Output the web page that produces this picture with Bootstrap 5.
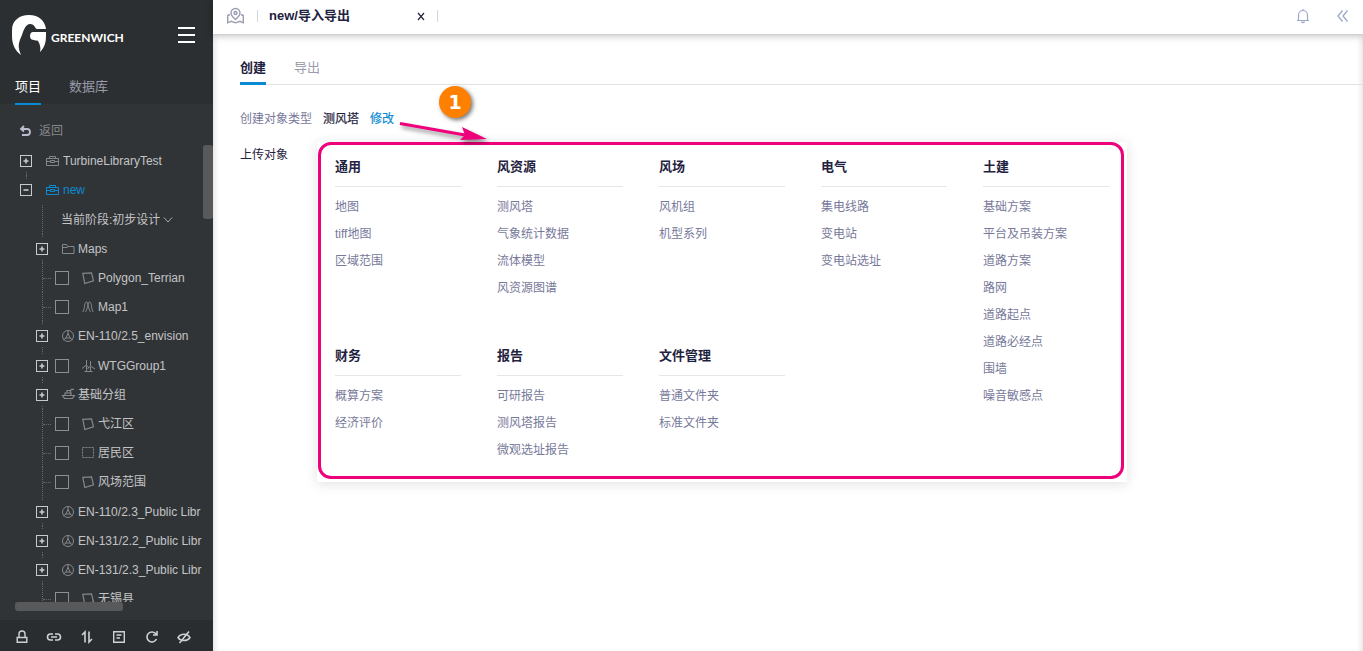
<!DOCTYPE html>
<html lang="zh-CN">
<head>
<meta charset="utf-8">
<meta name="viewport" content="width=device-width, initial-scale=1">
<title>Greenwich - 导入导出</title>
<link href="https://cdn.jsdelivr.net/npm/bootstrap@5.3.0/dist/css/bootstrap.min.css" rel="stylesheet">
<style>
body{font-family:"Liberation Sans","Noto Sans CJK SC",sans-serif;font-size:12px;line-height:16px;color:#1f2340;background:#fff}
svg{display:block;flex:none;overflow:visible}
button{line-height:16px}
a{text-decoration:none}
.bare{border:0;background:none;padding:0;color:inherit}
/* sidebar */
.side{width:213px;background:#313437;color:#c3c4c6}
.side-top{background:#2c2f31;height:104px;padding:0 18px 0 15px}
.brand{color:#fff;height:70px}
.brand-logo{margin-left:-3px}
.brand-name{font:700 12px/16px Lato,sans-serif;margin-left:5px;padding-top:5px}
.side-tabs{height:35px;gap:28px;font-size:13px}
.side-tabs a{color:#9a9bab;border-bottom:2px solid transparent;line-height:33px}
.side-tabs a.active{color:#fff;border-color:#0a8ad2}
.back{height:43px;padding:19px 0 0 20px;color:#85878a}
.tree{margin:0 10px 18px 0;overflow:hidden}
.tree ul{list-style:none;margin:0;padding:0 0 1px}
.node{height:29px;position:relative;white-space:nowrap;padding-left:20px}
.lvl2 .node{padding-left:36px}
.node::before{content:"";position:absolute;left:26px;top:0;bottom:0;border-left:1px dotted #66696c}
.lvl2 .node::before{left:42px}
.lvl1 .node:first-child::before{top:5px}
.lvl1 .node:last-child::before{bottom:15px}
.leaf::after{content:"";position:absolute;left:43px;width:8px;top:15px;border-top:1px dotted #66696c}
.exp{width:12px;height:21px;background:#313437;z-index:1;display:flex;align-items:center;color:#c8c9cb}
.slot{width:12px}
.ico{margin-left:14px;margin-right:4px;color:#85888b}
.node input[type=checkbox]{appearance:none;width:14px;height:14px;border:1px solid #8d9093;margin:0 0 0 7px;flex:none}
.node input+label .ico{margin-left:13px}
.node.current,.node.current .ico{color:#0a8ad2}
.stage select{appearance:none;border:0;background:none;color:inherit;padding:0;width:48px;font-size:12px;line-height:16px}
.lvl2 .stage{padding-left:61px}
.bar-v{position:absolute;right:0;top:145px;width:10px;height:74px;border-radius:3px;background:#58595a}
.bar-h{position:absolute;left:15px;bottom:40px;width:108px;height:9px;border-radius:3px;background:#58595a}
.side-foot{height:32px;background:#2a2d30;padding:4px 21px 0 14px;color:#d0d1d2}
/* top bar */
.top{height:34px;box-shadow:0 1px 8px rgba(0,0,0,.3);z-index:2;padding:0 14px 2px 14px;color:#9fa5bd}
.top .rule{width:1px;height:12px;background:#d5d6df}
.rule-open{margin:0 11px 0 13px}
.rule-close{margin-left:11px}
.collapse-btn{margin-left:28px}
.page-name{width:147px;font-size:13px;font-weight:700;color:#1f2340}
.content{padding:20px 0 0 27px;box-shadow:inset 5px 0 6px -4px rgba(0,0,0,.14),inset -5px 0 6px -4px rgba(0,0,0,.14)}
.main-tabs{border-bottom:1px solid #e2e2e4;gap:28px;height:31px}
.main-tabs a{color:#9b9cab;font-size:13px;line-height:28px;height:31px;border-bottom:3px solid transparent}
.main-tabs a.active{color:#1f2340;font-weight:700;border-color:#0a8ad2}
.type-row{margin-top:26px;gap:11px}
.type-row .picked{-webkit-text-stroke:.2px}
.muted{color:#77799a}
.edit{color:#0a8ad2;-webkit-text-stroke:.2px}
.upload{margin-top:15px}
.upload-label{width:77px;padding-top:5px}
.picker{max-width:810px;flex:1;padding:4px 18px 18px;box-shadow:0 2px 12px rgba(0,0,0,.12);display:grid;grid-template-columns:repeat(5,minmax(0,1fr));gap:33px 36px;background:#fff}
.picker h2{font-size:13px;line-height:38px;padding-top:2px;font-weight:700;margin:0 0 7px;border-bottom:1px solid #e6e6e9}
.picker section a{display:block;line-height:27px;color:#77799a}
.tall{grid-column:5;grid-row:1/3}
.frame{position:absolute;inset:0 3px 3px 1px;border:3px solid #ee007c;border-radius:13px;pointer-events:none}
.callout{position:absolute;left:80px;top:-60px;pointer-events:none;filter:drop-shadow(2px 3px 2px rgba(0,0,0,.45))}
.step{position:absolute;left:122px;top:-56px;width:32px;height:32px;border-radius:50%;background:#ff8000;color:#fff;font:700 19px/32px "DejaVu Sans",sans-serif;text-align:center;box-shadow:2px 2px 4px rgba(0,0,0,.55)}
</style>
</head>
<body>
<svg width="0" height="0" class="position-absolute" aria-hidden="true"><defs>
<g id="plus" fill="none" stroke="currentColor"><rect x=".5" y=".5" width="11" height="11"/><path d="M3.500 6h5M6 3.500v5" stroke-width="1.600"/></g>
<g id="minus" fill="none" stroke="currentColor"><rect x=".5" y=".5" width="11" height="11"/><path d="M3.500 6h5" stroke-width="1.600"/></g>
<g id="case" fill="none" stroke="currentColor"><path d="M.5 3.500h12v7H.5zM3.500 3.500v-2h6v2M.5 6.500h4m4 0h4M4.500 5.500h4v2h-4z"/></g>
<g id="folder" fill="none" stroke="currentColor"><path d="M.5 10.500v-9h4l1 2h6.500v7zM.5 4.500h5"/></g>
<g id="poly" fill="none" stroke="currentColor" stroke-width="1.200"><path d="M.8 1.300 9.500.8l2 8-8.700 2.700z"/></g>
<g id="contour" fill="none" stroke="currentColor"><path d="M.5 11C3 9 2 1 4.500 1S5.500 8 3.500 11M11.500 11C9 9 10 1 7.500 1S6.500 8 8.500 11"/></g>
<g id="turbine" fill="none" stroke="currentColor"><circle cx="6" cy="6" r="5.500"/><path d="M6 .5v4M4 8l-2.800 2M8 8l2.800 2M6 3.500 3.800 8h4.400z"/></g>
<g id="mill" fill="none" stroke="currentColor"><path d="M4.500 0v5L0 8.500M4.500 5 7 8M4.500 6v6M8.500 1v5L5.500 9M8.500 6 13 9M8.500 7v5M2.500 11.500h8"/></g>
<g id="base" fill="none" stroke="currentColor" stroke-width="1.200"><path d="M.6 6.500h11.800l-2 3H2.500zM3 6V4h6v2M5 4V1.500h3.500v2M8.500 1.500 9.500.3H12"/></g>
<g id="area" fill="none" stroke="currentColor"><rect x=".5" y=".5" width="11" height="10" stroke-dasharray="2 1"/></g>
</defs></svg>
<div class="d-flex vh-100 overflow-hidden">
<aside class="side d-flex flex-column flex-shrink-0 position-relative">
  <div class="side-top">
    <div class="brand d-flex align-items-center">
      <svg class="brand-logo" width="34" height="40" viewBox="0 0 34 40" fill="#fff"><path d="M9 40C3 36 0 29 0 21v-6C0 6 7 0 17 0s16 6 17 14h-9c-2 0-2-5-7-5-4 0-6 5-8 11C7 27 5 31 9 40z"/><path d="M21 17h13v4c0 7-2 12-6 16 1-4 0-8-2-11-1-1-2 0-4-1-2 0-4-1-4-4 0-2 1-4 3-4z"/></svg>
      <span class="brand-name">GREENWICH</span>
      <button class="bare ms-auto" aria-label="菜单"><svg width="17" height="16" viewBox="0 0 17 16" stroke="#fff" stroke-width="2"><path d="M0 1h17M0 8h17M0 15h17"/></svg></button>
    </div>
    <nav class="side-tabs d-flex"><a class="active" href="#">项目</a><a href="#">数据库</a></nav>
  </div>
  <div class="back"><button class="bare d-flex align-items-center"><svg width="11" height="10" viewBox="0 0 11 10" fill="none" stroke="#bcbdd0" stroke-width="1.800"><path d="M1 3h6a3 3 0 0 1 0 6H2M4 0 1 3l3 2.500"/></svg><span class="ms-2">返回</span></button></div>
  <div class="tree flex-grow-1">
    <ul class="lvl1">
      <li class="node d-flex align-items-center"><button class="bare exp" aria-label="展开"><svg width="12" height="12"><use href="#plus"/></svg></button><svg class="ico" width="13" height="12"><use href="#case"/></svg>TurbineLibraryTest</li>
      <li class="node current d-flex align-items-center"><button class="bare exp" aria-label="收起"><svg width="12" height="12"><use href="#minus"/></svg></button><svg class="ico" width="13" height="12"><use href="#case"/></svg>new</li>
    </ul>
    <ul class="lvl2">
      <li class="node stage d-flex align-items-center"><label for="stage">当前阶段:</label><select id="stage"><option>初步设计</option></select><svg class="ms-1" width="8" height="8" fill="none" stroke="#a9abad"><path d="M0 1.500 4 6l4-4.500"/></svg></li>
      <li class="node d-flex align-items-center"><button class="bare exp" aria-label="展开"><svg width="12" height="12"><use href="#plus"/></svg></button><svg class="ico" width="12" height="12"><use href="#folder"/></svg>Maps</li>
      <li class="node leaf d-flex align-items-center"><span class="slot"></span><input type="checkbox" id="n1"><label class="d-flex align-items-center" for="n1"><svg class="ico" width="12" height="12"><use href="#poly"/></svg>Polygon_Terrian</label></li>
      <li class="node leaf d-flex align-items-center"><span class="slot"></span><input type="checkbox" id="n2"><label class="d-flex align-items-center" for="n2"><svg class="ico" width="12" height="12"><use href="#contour"/></svg>Map1</label></li>
      <li class="node d-flex align-items-center"><button class="bare exp" aria-label="展开"><svg width="12" height="12"><use href="#plus"/></svg></button><svg class="ico" width="12" height="12"><use href="#turbine"/></svg>EN-110/2.5_envision</li>
    </ul>
    <ul class="lvl2">
      <li class="node d-flex align-items-center"><button class="bare exp" aria-label="展开"><svg width="12" height="12"><use href="#plus"/></svg></button><input type="checkbox" id="n3"><label class="d-flex align-items-center" for="n3"><svg class="ico" width="12" height="12"><use href="#mill"/></svg>WTGGroup1</label></li>
      <li class="node d-flex align-items-center"><button class="bare exp" aria-label="展开"><svg width="12" height="12"><use href="#plus"/></svg></button><svg class="ico" width="12" height="12"><use href="#base"/></svg>基础分组</li>
      <li class="node leaf d-flex align-items-center"><span class="slot"></span><input type="checkbox" id="n4"><label class="d-flex align-items-center" for="n4"><svg class="ico" width="12" height="12"><use href="#poly"/></svg>弋江区</label></li>
      <li class="node leaf d-flex align-items-center"><span class="slot"></span><input type="checkbox" id="n5"><label class="d-flex align-items-center" for="n5"><svg class="ico" width="12" height="12"><use href="#area"/></svg>居民区</label></li>
      <li class="node leaf d-flex align-items-center"><span class="slot"></span><input type="checkbox" id="n6"><label class="d-flex align-items-center" for="n6"><svg class="ico" width="12" height="12"><use href="#poly"/></svg>风场范围</label></li>
    </ul>
    <ul class="lvl2">
      <li class="node d-flex align-items-center"><button class="bare exp" aria-label="展开"><svg width="12" height="12"><use href="#plus"/></svg></button><svg class="ico" width="12" height="12"><use href="#turbine"/></svg>EN-110/2.3_Public Libr</li>
      <li class="node d-flex align-items-center"><button class="bare exp" aria-label="展开"><svg width="12" height="12"><use href="#plus"/></svg></button><svg class="ico" width="12" height="12"><use href="#turbine"/></svg>EN-131/2.2_Public Libr</li>
      <li class="node d-flex align-items-center"><button class="bare exp" aria-label="展开"><svg width="12" height="12"><use href="#plus"/></svg></button><svg class="ico" width="12" height="12"><use href="#turbine"/></svg>EN-131/2.3_Public Libr</li>
      <li class="node leaf d-flex align-items-center"><span class="slot"></span><input type="checkbox" id="n7"><label class="d-flex align-items-center" for="n7"><svg class="ico" width="12" height="12"><use href="#poly"/></svg>无锡县</label></li>
    </ul>
  </div>
  <span class="bar-v"></span><span class="bar-h"></span>
  <div class="side-foot d-flex justify-content-between align-items-center">
    <button class="bare" aria-label="锁定"><svg width="16" height="14" fill="none" stroke="currentColor" stroke-width="1.400"><path d="M3.200 7.500h9.600v4.800H3.200zM5 7.500V4a3 3 0 0 1 6 0v3.500"/></svg></button>
    <button class="bare" aria-label="链接"><svg width="16" height="14" fill="none" stroke="currentColor" stroke-width="1.600"><path d="M7 4H4.500a3 3 0 0 0 0 6H7M9 4h2.500a3 3 0 0 1 0 6H9M5 7h6"/></svg></button>
    <button class="bare" aria-label="排序"><svg width="16" height="14" fill="none" stroke="currentColor" stroke-width="1.600"><path d="M6 12.500V2L3 5M10 1.500V12l3-3"/></svg></button>
    <button class="bare" aria-label="记录"><svg width="16" height="14" fill="none" stroke="currentColor" stroke-width="1.400"><path d="M2.700 1.700h10.600v10.600H2.700zM5.500 5h5M5.500 8h3.500"/></svg></button>
    <button class="bare" aria-label="刷新"><svg width="16" height="14" fill="none" stroke="currentColor" stroke-width="1.600"><path d="M12.500 9A5 5 0 1 1 12 4M13 1v4H9"/></svg></button>
    <button class="bare" aria-label="隐藏"><svg width="16" height="14" fill="none" stroke="currentColor" stroke-width="1.500"><path d="M2 7.500C4.500 3 11.500 3 14 7.500 11.500 11.500 4.500 11.500 2 7.500zM13 1.500 3.500 13M9.500 5.500l-3 4"/></svg></button>
  </div>
</aside>
<main class="flex-grow-1 d-flex flex-column">
  <header class="top d-flex align-items-center position-relative">
    <button class="bare" aria-label="地图"><svg width="17" height="16" viewBox="0 0 17 16" fill="none" stroke="#9a9cb0" stroke-width="1.400"><path d="M8.500 11.500C6 9 4 7.500 4 5a4.500 4.500 0 0 1 9 0c0 2.500-2 4-4.500 6.500z"/><circle cx="8.500" cy="5" r="1.500"/><path d="M3 6.500.7 7.500v7.300l3.500-1.500 4.300 1.500 4.300-1.500 3.500 1.500V7.500L14 6.500"/></svg></button>
    <span class="rule rule-open"></span>
    <span class="page-name">new/导入导出</span>
    <button class="bare" aria-label="关闭"><svg width="10" height="10" stroke="#25283a" stroke-width="1.200"><path d="M2 2l6 7M8 2 2 9"/></svg></button>
    <span class="rule rule-close"></span>
    <button class="bare ms-auto" aria-label="通知"><svg width="12" height="14" fill="none" stroke="#9ba8c8" stroke-width="1.200"><path d="M0 11.500h12M1.500 11.500V6a4.500 4.500 0 0 1 9 0v5.500M6 0v1.500M4.500 12.500c.5 1.500 2.500 1.500 3 0"/></svg></button>
    <button class="bare collapse-btn" aria-label="收起"><svg width="12" height="12" fill="none" stroke="#9ba8c8" stroke-width="1.300"><path d="M5.500.5 1 6l4.500 5.500M10.500.5 6 6l4.500 5.500"/></svg></button>
  </header>
  <div class="content flex-grow-1">
    <nav class="main-tabs d-flex"><a class="active" href="#">创建</a><a href="#">导出</a></nav>
    <div class="type-row d-flex"><span class="muted">创建对象类型</span><span class="picked">测风塔</span><a class="edit" href="#">修改</a></div>
    <div class="upload d-flex align-items-start">
      <span class="upload-label">上传对象</span>
      <div class="picker position-relative">
        <section><h2>通用</h2><a href="#">地图</a><a href="#">tiff地图</a><a href="#">区域范围</a></section>
        <section><h2>风资源</h2><a href="#">测风塔</a><a href="#">气象统计数据</a><a href="#">流体模型</a><a href="#">风资源图谱</a></section>
        <section><h2>风场</h2><a href="#">风机组</a><a href="#">机型系列</a></section>
        <section><h2>电气</h2><a href="#">集电线路</a><a href="#">变电站</a><a href="#">变电站选址</a></section>
        <section class="tall"><h2>土建</h2><a href="#">基础方案</a><a href="#">平台及吊装方案</a><a href="#">道路方案</a><a href="#">路网</a><a href="#">道路起点</a><a href="#">道路必经点</a><a href="#">围墙</a><a href="#">噪音敏感点</a></section>
        <section><h2>财务</h2><a href="#">概算方案</a><a href="#">经济评价</a></section>
        <section><h2>报告</h2><a href="#">可研报告</a><a href="#">测风塔报告</a><a href="#">微观选址报告</a></section>
        <section><h2>文件管理</h2><a href="#">普通文件夹</a><a href="#">标准文件夹</a></section>
        <div class="frame"></div>
        <svg class="callout" width="92" height="64" viewBox="0 0 92 64"><path d="M3 41.500 68 53" stroke="#ee007c" stroke-width="3"/><path d="M65 45 90 57l-27 1 5-5z" fill="#ee007c"/></svg>
        <span class="step">1</span>
      </div>
    </div>
  </div>
</main>
</div>
<script src="https://cdn.jsdelivr.net/npm/bootstrap@5.3.0/dist/js/bootstrap.bundle.min.js"></script>
</body>
</html>
